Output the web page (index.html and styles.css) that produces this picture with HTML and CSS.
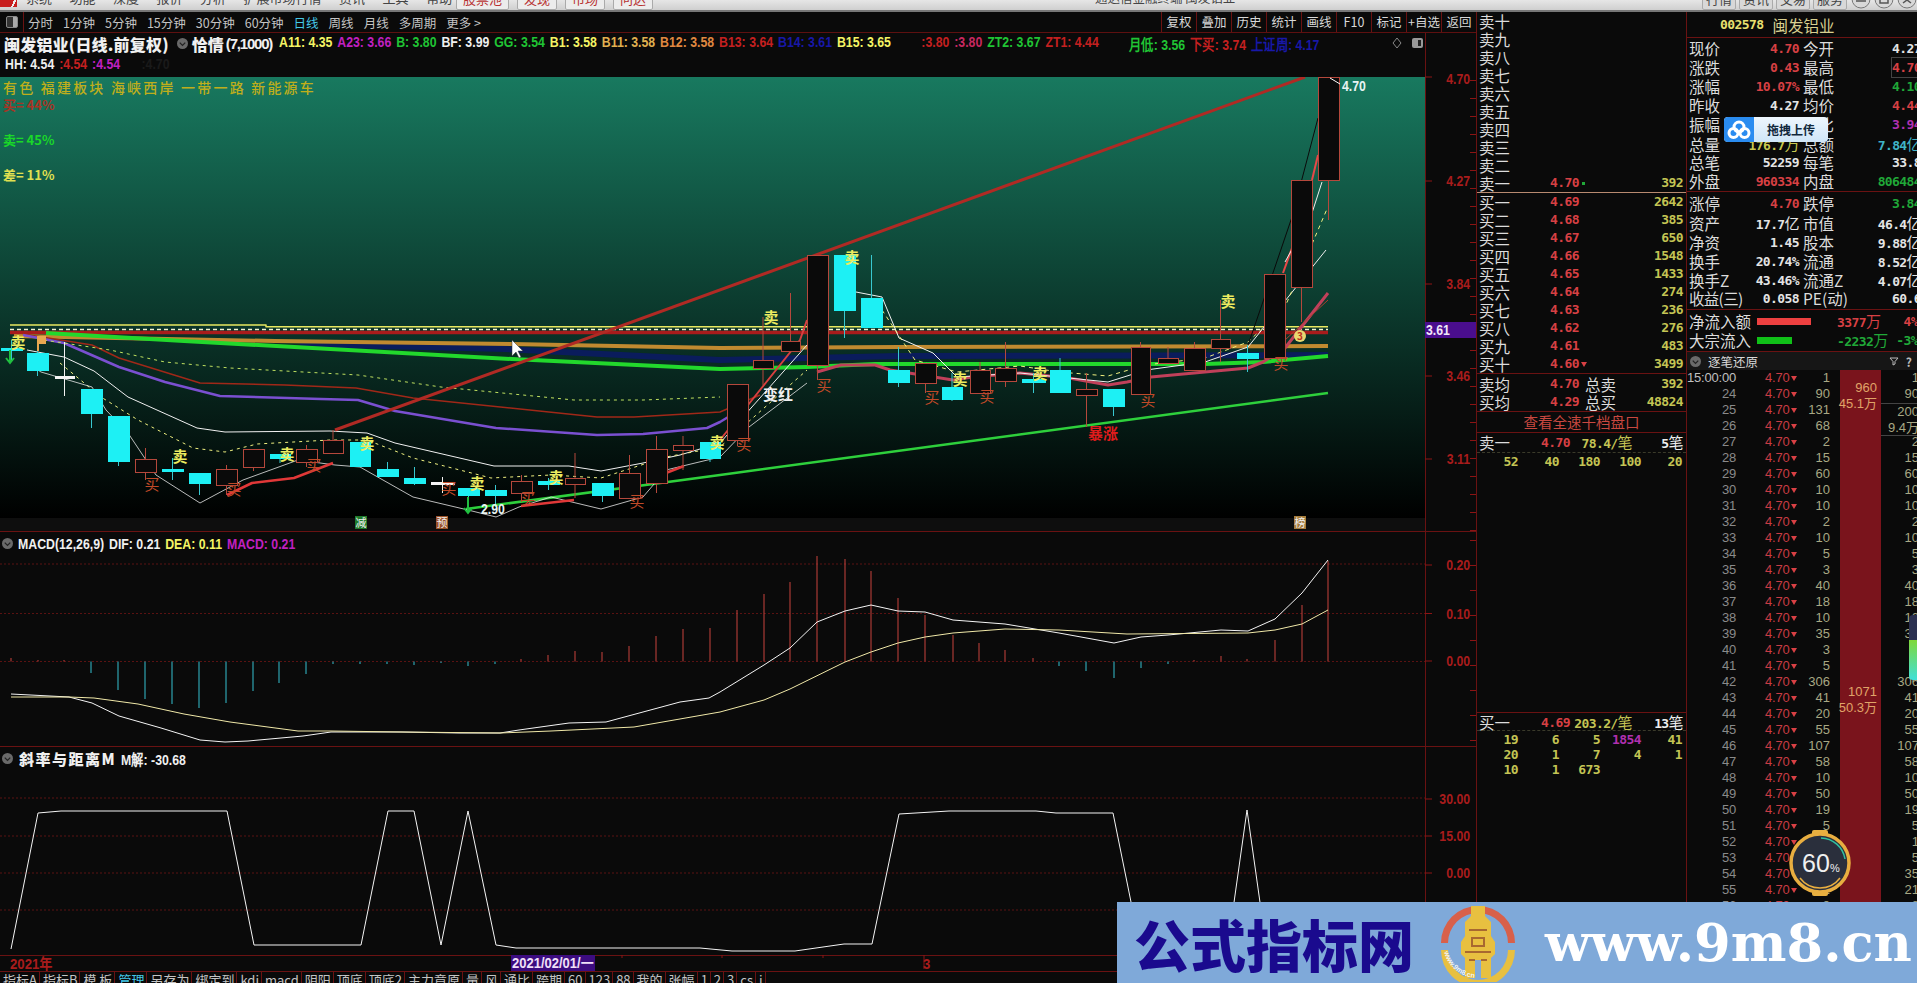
FILE: index.html
```html
<!DOCTYPE html>
<html lang="zh-CN">
  <head>
    <meta charset="UTF-8" />
    <title>闽发铝业</title>
    <link rel="stylesheet" href="styles.css">
  </head>
  <body>
    <header class="titlebar">
      <span class="logo"></span>
      <nav class="menu">
        <span>系统</span><span>功能</span><span>深度</span><span>报价</span><span>分析</span><span>扩展市场行情</span><span>资讯</span><span>工具</span><span>帮助</span>
      </nav>
      <nav class="menu-boxed">
        <span>股票池</span><span>发现</span><span>市场</span><span>问达</span>
      </nav>
      <span class="app-title">通达信金融终端 闽发铝业</span>
      <nav class="menu-boxed grey">
        <span>行情</span><span>资讯</span><span>交易</span><span>服务</span>
      </nav>
      <svg class="winbtns" viewBox="0 0 66 11">
        <g fill="#d8d8d8" stroke="#777">
          <circle cx="10" cy="-1" r="9" />
          <circle cx="33" cy="-1" r="9" />
          <circle cx="56" cy="-1" r="9" />
        </g>
        <path d="M5 1h10M29 -3h8v6h-8zM52 -3l8 6M60 -3l-8 6" stroke="#555" stroke-width="1.5" fill="none" />
      </svg>
    </header>

    <div class="workspace">
      <main class="chart-col">
        <div class="periods">
          <span class="toggle"><i></i></span>
          <div class="period-tabs">
            <span>分时</span><span>1分钟</span><span>5分钟</span><span>15分钟</span><span>30分钟</span><span>60分钟</span>
            <span class="on">日线</span><span>周线</span><span>月线</span><span>多周期</span><span>更多 &gt;</span>
          </div>
          <div class="tools">
            <span>复权</span><span>叠加</span><span>历史</span><span>统计</span><span>画线</span><span>F10</span><span>标记</span><span>+自选</span><span>返回</span>
          </div>
        </div>

        <section class="pane pane-main">
          <div class="plot">
            <div class="legend legend-main">
              <div class="legend-row">
                <div class="legend-head">
                  <b class="stock">闽发铝业(日线.前复权)</b>
                  <svg class="drop" viewBox="0 0 12 12"><circle cx="6" cy="6" r="6" /><path d="M3 5l3 3 3-3" /></svg>
                  <b class="stock">恰情</b>
                  <span class="stock-args">(7,1000)</span>
                </div>
                <div class="legend-values">
                  <span class="c-yellow">A11: 4.35</span>
                  <span class="c-purple">A23: 3.66</span>
                  <span class="c-green">B: 3.80</span>
                  <span class="c-white">BF: 3.99</span>
                  <span class="c-green">GG: 3.54</span>
                  <span class="c-yellow">B1: 3.58</span>
                  <span class="c-gold">B11: 3.58</span>
                  <span class="c-orange">B12: 3.58</span>
                  <span class="c-red">B13: 3.64</span>
                  <span class="c-navy">B14: 3.61</span>
                  <span class="c-yellow">B15: 3.65</span>
                  <span class="c-red far">:3.80</span>
                  <span class="c-rose">:3.80</span>
                  <span class="c-green">ZT2: 3.67</span>
                  <span class="c-red">ZT1: 4.44</span>
                  <span class="c-green far">月低: 3.56</span>
                  <span class="c-red">下买: 3.74</span>
                  <span class="c-navy">上证周: 4.17</span>
                </div>
              </div>
              <div class="legend-row second">
                <div class="legend-values">
                  <span class="c-white">HH: 4.54</span>
                  <span class="c-red">:4.54</span>
                  <span class="c-purple">:4.54</span>
                  <span class="c-hidden">:4.70</span>
                </div>
              </div>
              <svg class="legend-icons" viewBox="0 0 32 12">
                <path d="M5 1l4 5-4 5-4-5z" fill="none" stroke="#888" />
                <rect x="20" y="1" width="11" height="10" rx="2" fill="#999" />
                <rect x="26" y="3" width="3" height="6" fill="#222" />
              </svg>
            </div>
            <svg class="chart" viewBox="0 77 1425 454" width="1425" height="454">
              <defs>
                <linearGradient id="sky" x1="0" y1="0" x2="0" y2="1">
                  <stop offset="0" stop-color="#18795f" />
                  <stop offset="1" stop-color="#000" />
                </linearGradient>
              </defs>
              <rect x="0" y="77" width="1425" height="441" fill="url(#sky)" />
              <rect x="0" y="518" width="1425" height="13" fill="#0e0e0e" />

              <text class="tag-line" x="3" y="93">有色 福建板块 海峡西岸 一带一路 新能源车</text>
              <text class="ratio c-buy" x="3" y="110">买= 44%</text>
              <text class="ratio c-sell" x="3" y="145">卖= 45%</text>
              <text class="ratio c-diff" x="3" y="180">差= 11%</text>

              <g fill="none" stroke-linejoin="round">
                <path d="M10 325H266V326.7H1328" stroke="#e8e860" stroke-width="1.5" />
                <path d="M10 329.5H1328" stroke="#f4f4d0" stroke-width="1.5" stroke-dasharray="4 3" />
                <path d="M10 332.6H1328" stroke="#a81c1c" stroke-width="3.5" />
                <polyline points="300,344 505,349 720,360 900,356 1328,355" stroke="#0a1c5c" stroke-width="6" />
                <polyline points="14,336 275,341 512,344 720,348 900,347 1328,346" stroke="#c08a30" stroke-width="4" />
                <polyline points="46,333 184,341 512,359 720,369 807,367 875,364 1205,364 1263,362 1328,356" stroke="#22d82c" stroke-width="4" />
                <polyline points="466,509 720,475 1328,393" stroke="#2ed03c" stroke-width="2.5" />
                <polyline points="23,334 92,345 119,358 200,383 285,385 356,388 413,398 597,417 634,417 720,412 760,395" stroke="#a02818" stroke-width="1.5" />
                <polyline points="23,335 64,343 119,367 165,382 220,396 321,399 358,400 395,411 496,428 597,435 643,434 707,428 720,422 748,405" stroke="#7a50d0" stroke-width="2.5" />
                <polyline points="37,339 110,350 165,362 230,368 358,375 441,387 574,400 643,400 720,397" stroke="#bfe060" stroke-width="1" stroke-dasharray="3 4" />
                <polyline points="27,350 64,357 94,371 128,397 197,428 225,432 330,431 367,433 395,443 494,466 569,466 601,471 643,463 680,455 720,443 807,345" stroke="#f0f0f0" stroke-width="1" />
                <polyline points="60,363 101,397 138,420 193,448 225,452 257,444 330,440 367,440 413,458 491,478 551,475 601,478 666,457 720,447 807,370" stroke="#f0f080" stroke-width="1" stroke-dasharray="3 4" />
                <polyline points="27,363 41,372 92,387 106,410 128,433 156,475 200,503 243,480 298,460 335,465 360,467 413,497 468,510 496,517 519,507 551,497 601,509 643,497 666,470 720,457 749,427 807,383" stroke="#e8e8e8" stroke-width=".8" />
                <polyline points="227,495 252,483 294,478 333,463" stroke="#e03838" stroke-width="2.5" />
                <polyline points="521,506 574,500" stroke="#e03838" stroke-width="2.5" />
                <polyline points="666,473 684,466" stroke="#e03838" stroke-width="2.5" />
                <polyline points="720,440 748,405 800,340 807,320" stroke="#d84040" stroke-width="2" />
                <polyline points="817,372 841,365 875,365 890,370 953,380 972,377 1020,373 1069,378 1108,385 1127,382 1151,377 1248,368 1263,362 1285,348 1328,293" stroke="#c0405a" stroke-width="3" />
                <polyline points="1285,340 1328,300" stroke="#a84030" stroke-width="1" />
                <polyline points="856,292 882,297 899,338 933,353 957,377 1020,373 1059,377 1108,382 1146,370 1205,362 1248,347 1326,250" stroke="#f0f0f0" stroke-width="1" />
                <polyline points="882,310 915,360 957,372 1020,366 1059,372 1108,376 1146,365 1205,358 1248,342 1285,307 1327,209" stroke="#f0f080" stroke-width="1" stroke-dasharray="4 4" />
                <polyline points="1248,345 1275,267 1292,217 1318,118" stroke="#0a0a0a" stroke-width="1" />
                <polyline points="1283,273 1292,248" stroke="#e84848" stroke-width="2" />
                <polyline points="1312,180 1318,155" stroke="#e84848" stroke-width="2" />
                <polyline points="1285,262 1312,213 1322,182" stroke="#f0f0f0" stroke-width="1" />
                <polyline points="335,430 1305,77" stroke="#b02a24" stroke-width="3" />
              </g>
              <g id="candles"></g>
              <g id="marks"></g>
              <path d="M512 340v16l4-4 3 6 2-1-3-6h5z" fill="#fff" stroke="#333" stroke-width=".5" />
              <path d="M37 336h9v8h-7v7h-2z" fill="#e8a850" />
              <path d="M10 350v12M6 358l4 5 4-5M468 497v15M464 508l4 5 4-5" fill="none" stroke="#20c040" stroke-width="2" />
              <circle cx="1300" cy="336" r="6" fill="#e8d870" />
              <text class="mini" x="1297" y="340" fill="#c03020">3</text>
              <path d="M1330 78l10 6" stroke="#fff" fill="none" />
              <text class="price-note" x="1342" y="91">4.70</text>
              <text class="price-note" x="481" y="514">2.90</text>
              <rect x="355" y="516" width="12" height="13" fill="#1e7a2a" />
              <rect x="436" y="516" width="12" height="13" fill="#9c5228" />
              <rect x="1294" y="516" width="12" height="13" fill="#a57c3c" />
              <text class="flag-text" x="355.5" y="527">减</text>
              <text class="flag-text" x="436.5" y="527">预</text>
              <text class="flag-text" x="1294.5" y="527">榜</text>
            </svg>
          </div>
          <svg class="axis" viewBox="1425 33 51 498" width="51" height="498">
            <path class="axis-rule" d="M1425.5 33V531" />
            <path d="M1425 77h7M1425 181h7M1425 284h7M1425 376h7M1425 459h7" stroke="#8c1414" />
            <path class="axis-dash" d="M1473 80V531" stroke-dasharray="1 17" />
            <text class="axis-text" x="1470" y="84">4.70</text>
            <text class="axis-text" x="1470" y="186">4.27</text>
            <text class="axis-text" x="1470" y="289">3.84</text>
            <text class="axis-text" x="1470" y="381">3.46</text>
            <text class="axis-text" x="1470" y="464">3.11</text>
            <rect x="1425" y="322" width="51" height="16" fill="#4a0e8e" />
            <text class="axis-mark" x="1426" y="335">3.61</text>
          </svg>
        </section>

        <section class="pane pane-macd">
          <div class="plot">
            <div class="legend legend-sub macd-legend">
              <div class="legend-row">
                <div class="legend-head auto">
                  <svg class="drop" viewBox="0 0 12 12"><circle cx="6" cy="6" r="6" /><path d="M3 5l3 3 3-3" /></svg>
                </div>
                <div class="legend-values">
                  <span class="c-white">MACD(12,26,9)</span>
                  <span class="c-white">DIF: 0.21</span>
                  <span class="c-yellow">DEA: 0.11</span>
                  <span class="c-purple">MACD: 0.21</span>
                </div>
              </div>
            </div>
            <svg class="chart" viewBox="0 555 1425 191" width="1425" height="191">
              <path class="grid" d="M0 564H1425M0 613.5H1425M0 661.5H1425" />
              <g id="macd-bars"></g>
              <polyline class="macd-dif" points="11,694 50,696 69,697 92,703 119,716 161,728 200,740 225,742 248,741 303,736 331,732 402,732 459,733 500,733 519,730 569,723 606,722 680,702 709,698 720,692 764,665 790,648 817,622 845,611 871,605 898,611 925,612 953,620 979,622 1005,624 1059,633 1114,643 1141,637 1168,635 1221,630 1248,631 1275,619 1302,593 1328,560" />
              <polyline class="macd-dea" points="11,697 69,697 94,698 138,704 184,714 230,722 298,731 331,731 402,732 500,733 551,731 634,727 720,712 764,700 790,689 845,662 871,652 898,643 925,637 953,633 1005,629 1059,630 1127,634 1248,633 1275,630 1302,624 1328,610" />
            </svg>
          </div>
          <svg class="axis" viewBox="1425 532 51 214" width="51" height="214">
            <path class="axis-rule" d="M1425.5 532V746" />
            <path d="M1425 565h7M1425 613.5h7M1425 661h7" stroke="#8c1414" />
            <path class="axis-dash" d="M1473 540V746" stroke-dasharray="1 24" />
            <text class="axis-text" x="1470" y="570">0.20</text>
            <text class="axis-text" x="1470" y="619">0.10</text>
            <text class="axis-text" x="1470" y="666">0.00</text>
          </svg>
        </section>

        <section class="pane pane-slope">
          <div class="plot">
            <div class="legend legend-sub slope-legend">
              <div class="legend-row">
                <div class="legend-head auto">
                  <svg class="drop" viewBox="0 0 12 12"><circle cx="6" cy="6" r="6" /><path d="M3 5l3 3 3-3" /></svg>
                  <b class="c-white cjk-bold">斜率与距离M</b>
                </div>
                <div class="legend-values">
                  <span class="c-white">M解: -30.68</span>
                </div>
              </div>
            </div>
            <svg class="chart" viewBox="0 769 1425 186" width="1425" height="186">
              <path class="grid" d="M0 798H1425M0 836H1425M0 873H1425M0 910H1425" />
              <polyline class="slope-line" points="11,949 38,813 61,811 227,811 254,945 361,945 388,811 414,811 441,945 468,811 496,945 516,948 700,948 732,951 795,951 844,944 872,944 899,814 949,811 1036,811 1056,813 1113,813 1131,902 1140,945 1228,945 1247,810 1266,945" />
            </svg>
          </div>
          <svg class="axis" viewBox="1425 747 51 208" width="51" height="208">
            <path class="axis-rule" d="M1425.5 747V955" />
            <path d="M1425 799h7M1425 836h7M1425 873h7" stroke="#8c1414" />
            <text class="axis-text" x="1470" y="804">30.00</text>
            <text class="axis-text" x="1470" y="841">15.00</text>
            <text class="axis-text" x="1470" y="878">0.00</text>
          </svg>
        </section>

        <svg class="date-axis" viewBox="0 955 1476 16" width="1476" height="16">
          <path class="axis-rule" d="M0 955.5H1476" />
          <path d="M622 955v3M722 955v3M823 955v3M924 955v14" stroke="#8c1414" />
          <text class="date-year" x="10" y="969">2021年</text>
          <rect x="511" y="955" width="84" height="16" fill="#3c0c80" />
          <text class="date-cursor" x="512" y="968">2021/02/01/一</text>
          <text class="date-year" x="923" y="969">3</text>
        </svg>

        <div class="tabs">
          <span>指标A</span><span>指标B</span><span>模 板</span><span class="on">管理</span><span>另存为</span><span>绑定到</span><span>kdj</span><span>macd</span><span>阴阳</span><span>顶底</span><span>顶底2</span><span>主力竟原</span><span>量</span><span>风</span><span>通比</span><span>跨期</span><span>60</span><span>123</span><span>88</span><span>我的</span><span>张幅</span><span>1</span><span>2</span><span>3</span><span>cs</span><span>j</span>
        </div>
      </main>

      <aside class="book">
        <div class="asks">
          <div class="book-row"><span>卖十</span></div>
          <div class="book-row"><span>卖九</span></div>
          <div class="book-row"><span>卖八</span></div>
          <div class="book-row"><span>卖七</span></div>
          <div class="book-row"><span>卖六</span></div>
          <div class="book-row"><span>卖五</span></div>
          <div class="book-row"><span>卖四</span></div>
          <div class="book-row"><span>卖三</span></div>
          <div class="book-row"><span>卖二</span></div>
          <div class="book-row"><span>卖一</span><b class="red">4.70<i class="dot"></i></b><b class="qty">392</b></div>
        </div>
        <div class="bids">
          <div class="book-row"><span>买一</span><b class="red">4.69</b><b class="qty">2642</b></div>
          <div class="book-row"><span>买二</span><b class="red">4.68</b><b class="qty">385</b></div>
          <div class="book-row"><span>买三</span><b class="red">4.67</b><b class="qty">650</b></div>
          <div class="book-row"><span>买四</span><b class="red">4.66</b><b class="qty">1548</b></div>
          <div class="book-row"><span>买五</span><b class="red">4.65</b><b class="qty">1433</b></div>
          <div class="book-row"><span>买六</span><b class="red">4.64</b><b class="qty">274</b></div>
          <div class="book-row"><span>买七</span><b class="red">4.63</b><b class="qty">236</b></div>
          <div class="book-row"><span>买八</span><b class="red">4.62</b><b class="qty">276</b></div>
          <div class="book-row"><span>买九</span><b class="red">4.61</b><b class="qty">483</b></div>
          <div class="book-row"><span>买十</span><b class="red">4.60<i class="tri"></i></b><b class="qty">3499</b></div>
        </div>
        <div class="totals">
          <div class="book-row total"><span>卖均</span><b class="red">4.70</b><span class="sum">总卖</span><b class="qty">392</b></div>
          <div class="book-row total"><span>买均</span><b class="red">4.29</b><span class="sum">总买</span><b class="qty">48824</b></div>
        </div>
        <div class="depth-link">查看全速千档盘口</div>
        <div class="depth-row dashed"><span>卖一</span><b class="red">4.70</b><b class="qty">78.4/<i>笔</i></b><b class="count">5<i>笔</i></b></div>
        <div class="queue">
          <b>52</b><b>40</b><b>180</b><b>100</b><b>20</b>
        </div>
        <div class="book-fill"></div>
        <div class="depth-row dashed top-line"><span>买一</span><b class="red">4.69</b><b class="qty">203.2/<i>笔</i></b><b class="count">13<i>笔</i></b></div>
        <div class="queue tight">
          <b>19</b><b>6</b><b>5</b><b class="violet">1854</b><b>41</b>
          <b>20</b><b>1</b><b>7</b><b>4</b><b>1</b>
          <b>10</b><b>1</b><b>673</b>
        </div>
      </aside>

      <aside class="quote">
        <div class="quote-head"><b>002578</b><span>闽发铝业</span></div>
        <div class="quote-block">
          <div class="quote-row"><span>现价</span><b class="red">4.70</b><span>今开</span><b class="white">4.27</b></div>
          <div class="quote-row"><span>涨跌</span><b class="red">0.43</b><span>最高</span><b class="red boxed">4.70</b></div>
          <div class="quote-row"><span>涨幅</span><b class="red">10.07%</b><span>最低</span><b class="green">4.10</b></div>
          <div class="quote-row"><span>昨收</span><b class="white">4.27</b><span>均价</span><b class="red">4.44</b></div>
          <div class="quote-row"><span>振幅</span><b class="white">14.05%</b><span>量比</span><b class="violet">3.94</b></div>
          <div class="quote-row"><span>总量</span><b class="yellow">176.7<i>万</i></b><span>总额</span><b class="cyan">7.84<i>亿</i></b></div>
          <div class="quote-row"><span>总笔</span><b class="white">52259</b><span>每笔</span><b class="white">33.8</b></div>
          <div class="quote-row"><span>外盘</span><b class="red">960334</b><span>内盘</span><b class="green">806484</b></div>
        </div>
        <div class="quote-block">
          <div class="quote-row"><span>涨停</span><b class="red">4.70</b><span>跌停</span><b class="green">3.84</b></div>
          <div class="quote-row"><span>资产</span><b class="white">17.7<i>亿</i></b><span>市值</span><b class="white">46.4<i>亿</i></b></div>
          <div class="quote-row"><span>净资</span><b class="white">1.45</b><span>股本</span><b class="white">9.88<i>亿</i></b></div>
          <div class="quote-row"><span>换手</span><b class="white">20.74%</b><span>流通</span><b class="white">8.52<i>亿</i></b></div>
          <div class="quote-row"><span>换手Z</span><b class="white">43.46%</b><span>流通Z</span><b class="white">4.07<i>亿</i></b></div>
          <div class="quote-row"><span class="tight-label">收益(三)</span><b class="white">0.058</b><span>PE(动)</span><b class="white">60.6</b></div>
        </div>
        <div class="flow-block">
          <div class="flow-row"><span>净流入额</span><i class="flow-bar in"></i><b class="red">3377<i>万</i></b><b class="red pct">4%</b></div>
          <div class="flow-row"><span>大宗流入</span><i class="flow-bar out"></i><b class="green">-2232<i>万</i></b><b class="green pct">-3%</b></div>
        </div>
        <div class="tick-head">
          <svg class="drop" viewBox="0 0 12 12"><circle cx="6" cy="6" r="6" /><path d="M3 5l3 3 3-3" /></svg>
          <span>逐笔还原</span>
          <svg class="tick-filter" viewBox="0 0 10 10"><path d="M1 2h8L6 5.5V8L4 9V5.5z" fill="none" stroke="#bbb" /></svg>
          <b>?</b>
        </div>
        <div class="ticks">
          <div id="tick-rows"></div>
          <div class="big-order first">960<br />45.1万</div>
          <div class="big-order second">1071<br />50.3万</div>
          <div class="side-order">200<br />9.4万</div>
        </div>
      </aside>
    </div>

    <div class="upload">
      <span class="upload-icon">
        <svg viewBox="0 0 24 20" width="24" height="20">
          <g fill="none" stroke="#fff" stroke-width="3">
            <circle cx="12" cy="7" r="5" />
            <circle cx="6.5" cy="13" r="4.5" />
            <circle cx="17.5" cy="13" r="4.5" />
          </g>
        </svg>
      </span>
      <b>拖拽上传</b>
    </div>

    <svg class="speed" viewBox="0 0 64 66" width="64" height="66">
      <rect x="24" y="0" width="16" height="6" rx="2" fill="#e8b040" />
      <rect x="24" y="60" width="16" height="6" rx="2" fill="#e8b040" />
      <circle cx="32" cy="33" r="29" fill="#2a2f3c" stroke="#e8ae40" stroke-width="3.5" />
      <path d="M33 8a25 25 0 0 1 24 21" fill="none" stroke="#30c0a0" stroke-width="1.5" />
      <path d="M12 48a25 25 0 0 0 40 0" fill="none" stroke="#e8ae40" stroke-width="1.5" />
      <text class="speed-num" x="14" y="42">60</text>
      <text class="speed-pct" x="42" y="42">%</text>
    </svg>

    <div class="mini-meter"></div>

    <div class="banner">
      <span class="banner-name">公式指标网</span>
      <svg class="banner-logo" viewBox="0 0 78 78" width="78" height="78">
        <defs>
          <path id="logo-ring" d="M5 48a35 35 0 0 0 32 26" />
        </defs>
        <path d="M2 39a37 37 0 0 1 74 0h-7a30 30 0 0 0-60 0z" fill="#d8604a" />
        <path d="M2 46a37 37 0 0 0 74 0h-7a30 30 0 0 1-60 0z" fill="#e8c040" />
        <path d="M32 2h14v10l6 6v14l4 6v12l-4 4v20H42V56h-6v18H26V54l-4-4V38l4-6V18l6-6z" fill="#e8c040" />
        <path d="M30 26h18M33 34h12v8H33zM26 48h26M30 56h6M42 56h6" fill="none" stroke="#a86830" stroke-width="2" />
        <text class="logo-ring-text"><textPath href="#logo-ring">www.9m8.cn</textPath></text>
      </svg>
      <span class="banner-url">www.9m8.cn</span>
    </div>

    <script src="script.js"></script>
  </body>
</html>
```

FILE: styles.css
```css
* {
  margin: 0;
  padding: 0;
  box-sizing: border-box;
}
html,
body {
  width: 1917px;
  height: 983px;
  overflow: hidden;
}
body {
  background-color: #0a0a0a;
  color: #dcdcdc;
  font-family: "Noto Sans CJK SC", "Liberation Sans", sans-serif;
  position: relative;
}
i,
em {
  font-style: normal;
}

/* title bar, only its lower part is on screen */
.titlebar {
  height: 12px;
  display: flex;
  align-items: flex-start;
  background: linear-gradient(#e6e6e6, #cfcfcf);
  border-bottom: 2px solid #777;
  overflow: hidden;
  font-size: 13px;
  line-height: 16px;
  color: #444;
}
.logo {
  width: 17px;
  height: 7px;
  background: linear-gradient(115deg, #c81e1e 70%, #eee 70%, #eee 80%, #c81e1e 80%);
  flex: none;
}
.menu {
  display: flex;
  gap: 17.5px;
  margin: -10px 0 0 9px;
  width: 430px;
  flex: none;
}
.menu-boxed {
  display: flex;
  gap: 8px;
  margin-top: -6px;
  flex: none;
}
.menu-boxed span {
  height: 16px;
  padding: 0 6px;
  margin-top: 0;
  line-height: 8px;
  color: #b83030;
  border: 1px solid #aaa;
  border-radius: 2px;
  background: #ececec;
}
.menu-boxed.grey {
  gap: 3px;
}
.menu-boxed.grey span {
  color: #444;
  padding: 0 3px;
  background: #d8d8d8;
}
.app-title {
  margin: -10px 467px 0 442px;
  flex: none;
  width: 140px;
  white-space: nowrap;
  font-size: 12.5px;
}
.winbtns {
  width: 66px;
  height: 11px;
  margin-left: auto;
  flex: none;
}

.workspace {
  display: grid;
  grid-template-columns: 1476px 211px 230px;
  height: 971px;
}
.chart-col {
  display: flex;
  flex-direction: column;
  min-width: 0;
}

/* period bar */
.periods {
  height: 21px;
  display: flex;
  align-items: center;
  font-size: 12.5px;
  color: #c4c4c4;
  border-bottom: 1px solid #5e1010;
  flex: none;
}
.toggle {
  width: 24px;
  height: 20px;
  display: flex;
  align-items: center;
  justify-content: center;
  border-right: 1px solid #6a1212;
  flex: none;
}
.toggle i {
  width: 12px;
  height: 12px;
  background: linear-gradient(90deg, #333 60%, #aaa 60%);
  border: 1px solid #888;
  border-radius: 2px;
}
.period-tabs {
  display: flex;
  gap: 10px;
  margin-left: 4px;
}
.period-tabs .on {
  color: #45c8e8;
}
.tools {
  margin-left: auto;
  display: flex;
  height: 20px;
  color: #d8d8d8;
}
.tools span {
  width: 35px;
  text-align: center;
  line-height: 20px;
  border-left: 1px solid #6a1212;
  white-space: nowrap;
}

/* chart panes */
.pane {
  display: flex;
  flex: none;
  border-bottom: 1px solid #6a1212;
}
.pane-main {
  height: 499px;
}
.pane-macd {
  height: 215px;
}
.pane-slope {
  height: 208px;
  border-bottom: 0;
}
.plot {
  width: 1425px;
  flex: none;
  position: relative;
}
.chart {
  display: block;
}
.axis {
  display: block;
  flex: none;
  overflow: hidden;
}
.axis-rule {
  fill: none;
  stroke: #6a1212;
}
.legend-main {
  height: 44px;
  padding: 0 0 0 4px;
  position: relative;
}
.macd-legend {
  height: 23px;
  padding: 1px 0 0 2px;
}
.slope-legend {
  height: 22px;
  padding: 1px 0 0 2px;
}
.legend-row {
  display: flex;
  align-items: center;
  height: 21px;
  font-family: "Liberation Sans", sans-serif;
  font-size: 15px;
  font-weight: 700;
  white-space: nowrap;
}
.legend-row.second {
  height: 18px;
  margin-left: 1px;
}
.legend-head {
  width: 275px;
  flex: none;
  display: flex;
  align-items: center;
  gap: 4px;
}
.legend-head.auto {
  width: auto;
  gap: 6px;
  margin-right: 5px;
}
.legend-values {
  display: flex;
  gap: 6px;
  transform: scaleX(0.82);
  transform-origin: left center;
}
.legend-values .far {
  margin-left: 31px;
}
.legend-values .c-hidden {
  margin-left: 20px;
}
.stock {
  font-family: "Noto Sans CJK SC", sans-serif;
  font-size: 16px;
  color: #f0f0f0;
}
.stock:first-child {
  letter-spacing: 0.2px;
  margin-right: 4px;
}
.stock-args {
  color: #f0f0f0;
  letter-spacing: -1.2px;
  margin-left: -2px;
}
.cjk-bold {
  font-family: "Noto Sans CJK SC", sans-serif;
  font-size: 15px;
  letter-spacing: 1.5px;
}
.drop {
  width: 11px;
  height: 11px;
  flex: none;
}
.drop circle {
  fill: #6a6a6a;
}
.drop path {
  fill: none;
  stroke: #222;
  stroke-width: 1.4;
}
.legend-icons {
  position: absolute;
  left: 1392px;
  top: 4px;
  width: 32px;
  height: 12px;
}
.c-white { color: #f0f0f0; }
.c-yellow { color: #f4f464; }
.c-gold { color: #e0b050; }
.c-orange { color: #e08840; }
.c-purple { color: #c020c0; }
.c-green { color: #20c434; }
.c-red { color: #c42020; }
.c-rose { color: #c82860; }
.c-navy { color: #1818a8; }
.c-hidden { color: #1a1a1a; }

/* text inside the svg charts */
.tag-line {
  font-size: 14px;
  font-weight: 500;
  fill: #bfae1c;
  letter-spacing: 2.2px;
}
.ratio {
  font-size: 13px;
  font-weight: 700;
}
.ratio.c-buy { fill: #a83424; }
.ratio.c-sell { fill: #1ad828; }
.ratio.c-diff { fill: #e0e050; }
.sell-mark {
  font-size: 15px;
  font-weight: 700;
  fill: #ecec60;
  text-anchor: middle;
}
.buy-mark {
  font-size: 15px;
  fill: #c04a28;
  text-anchor: middle;
}
.note-white {
  font-size: 15px;
  font-weight: 700;
  fill: #f0f0f0;
  text-anchor: middle;
}
.note-red {
  font-size: 15px;
  font-weight: 700;
  fill: #e01c1c;
  text-anchor: middle;
}
.price-note,
.axis-mark {
  font-family: "Liberation Sans", sans-serif;
  font-size: 15px;
  font-weight: 700;
  transform-box: fill-box;
  transform-origin: 0 50%;
  transform: scaleX(0.82);
}
.price-note {
  fill: #e8f4f4;
}
.axis-mark {
  fill: #f0e8f8;
}
.mini {
  font-size: 10px;
  font-weight: 700;
}
.flag-text {
  font-size: 11px;
  fill: #f0f0f0;
}
.grid {
  fill: none;
  stroke: #5a1212;
  stroke-dasharray: 2 2;
}
.macd-dif,
.macd-dea,
.slope-line {
  fill: none;
  stroke-width: 1;
}
.macd-dif,
.slope-line {
  stroke: #f4f4f4;
}
.macd-dea {
  stroke: #f0e8a8;
}
.axis-text {
  font-family: "Liberation Sans", sans-serif;
  font-size: 15px;
  font-weight: 700;
  fill: #a81c1c;
  text-anchor: end;
  transform-box: fill-box;
  transform-origin: 100% 50%;
  transform: scaleX(0.82);
}
.axis-dash {
  fill: none;
  stroke: #8c1414;
  stroke-width: 6;
}
.date-axis {
  display: block;
  flex: none;
}
.date-year,
.date-cursor {
  font-family: "Liberation Sans", "Noto Sans CJK SC", sans-serif;
  font-weight: 700;
  transform-box: fill-box;
  transform-origin: 0 50%;
}
.date-year {
  font-size: 15px;
  fill: #a81c1c;
  transform: scaleX(0.88);
}
.date-cursor {
  font-size: 14px;
  fill: #f0e0f8;
  transform: scaleX(0.93);
}

/* bottom tabs */
.tabs {
  height: 12px;
  display: flex;
  overflow: hidden;
  border-top: 1px solid #6a1212;
  font-size: 13px;
  line-height: 15px;
  color: #c4c4c4;
  flex: none;
}
.tabs span {
  padding: 0 2px 0 3px;
  border-right: 1px solid #6a1212;
  white-space: nowrap;
}
.tabs .on {
  color: #45c8e8;
}

/* order book */
.book {
  display: flex;
  flex-direction: column;
  border-left: 1px solid #6a1212;
  border-right: 1px solid #6a1212;
  font-size: 15.5px;
  min-height: 0;
  overflow: hidden;
}
.asks {
  border-bottom: 1px solid #b88a70;
  height: 181px;
  flex: none;
}
.bids {
  border-bottom: 1px solid #6a1212;
  height: 181px;
  flex: none;
}
.book-row {
  height: 18px;
  display: grid;
  grid-template-columns: 71px 50px 1fr;
  align-items: center;
  padding: 0 3px 0 2px;
  line-height: 18px;
}
.book-row b,
.depth-row b,
.queue b,
.quote-row b,
.flow-row b,
.quote-head b {
  font-family: "DejaVu Sans Mono", "Liberation Mono", monospace;
  font-size: 13px;
  letter-spacing: -0.6px;
  font-weight: 700;
}
.book-row .qty,
.depth-row .qty,
.depth-row .count {
  text-align: right;
}
.qty {
  color: #c4c454;
}
.red {
  color: #d84044;
}
.white {
  color: #e4e4e4;
}
.green {
  color: #20a838;
}
.yellow {
  color: #c8c850;
}
.cyan {
  color: #40b4c8;
}
.violet {
  color: #b030b0;
}
.dot {
  display: inline-block;
  width: 3px;
  height: 3px;
  margin-left: 3px;
  vertical-align: middle;
  background-color: #20a838;
}
.tri {
  display: inline-block;
  margin-left: 2px;
  vertical-align: middle;
  border-left: 3px solid transparent;
  border-right: 3px solid transparent;
  border-top: 5px solid #d84044;
}
.total {
  grid-template-columns: 71px 35px 40px 1fr;
}
.totals {
  height: 38px;
  flex: none;
  padding-top: 1px;
  border-bottom: 1px solid #6a1212;
}
.depth-link {
  height: 21px;
  flex: none;
  line-height: 20px;
  text-align: center;
  font-size: 14.5px;
  color: #c84840;
  border-bottom: 1px solid #6a1212;
}
.depth-row {
  height: 20px;
  flex: none;
  display: grid;
  grid-template-columns: 62px 30px 61px 51px;
  align-items: center;
  padding: 0 0 3px 2px;
  line-height: 17px;
}
.depth-row b i {
  font-family: "Noto Sans CJK SC", sans-serif;
  font-size: 15px;
  font-weight: 400;
}
.depth-row .count {
  color: #eee;
}
.dashed {
  border-bottom: 1px dashed #3a3a2a;
}
.top-line {
  border-top: 1px solid #6a1212;
  height: 19px;
}
.queue {
  display: grid;
  grid-template-columns: repeat(5, 41px);
  padding-top: 1px;
  height: 17px;
  flex: none;
}
.queue b {
  text-align: right;
  color: #c4c454;
  line-height: 16px;
}
.queue.tight {
  height: auto;
}
.queue.tight b {
  line-height: 15px;
}
.queue b.violet {
  color: #b030b0;
}
.book-fill {
  height: 242px;
  flex: none;
}

/* right column */
.quote {
  display: flex;
  flex-direction: column;
  overflow: hidden;
  min-height: 0;
}
.quote-head {
  height: 26px;
  flex: none;
  display: flex;
  align-items: center;
  padding: 0 0 0 33px;
  gap: 9px;
  border-bottom: 1px solid #6a1212;
  color: #d8d090;
  font-size: 15.5px;
}
.quote-head b {
  color: #e8e070;
}
.quote-block {
  padding: 1px 0 0 2px;
  border-bottom: 1px solid #6a1212;
  flex: none;
}
.quote-block:first-of-type {
  height: 154px;
}
.quote-block + .quote-block {
  height: 118px;
  padding-top: 2px;
}
.quote-row {
  width: 232px;
  height: 19px;
  display: grid;
  grid-template-columns: 31px 82px 36px 83px;
  align-items: center;
  line-height: 19px;
  font-size: 15.5px;
  white-space: nowrap;
}
.quote-row b {
  text-align: right;
}
.quote-row b:first-of-type {
  margin-right: 3px;
}
.quote-row span:nth-of-type(2) {
  margin-left: 1px;
}
.quote-row .tight-label {
  letter-spacing: -0.7px;
}
.quote-row i,
.flow-row i {
  font-family: "Noto Sans CJK SC", sans-serif;
  font-weight: 400;
  font-size: 15px;
}
.boxed {
  justify-self: end;
  outline: 1px solid #444;
}
.flow-block {
  height: 42px;
  flex: none;
  padding: 1px 0 0 2px;
  border-bottom: 1px solid #6a1212;
}
.flow-row {
  height: 19px;
  display: grid;
  grid-template-columns: 68px 80px 42px 38px;
  align-items: center;
  line-height: 19px;
  font-size: 15.5px;
  white-space: nowrap;
}
.flow-row > b {
  text-align: right;
}
.flow-row .pct {
  margin-right: -1px;
}
.flow-bar {
  display: block;
  height: 7px;
}
.flow-bar.in {
  width: 54px;
  background-color: #ee4040;
}
.flow-bar.out {
  width: 35px;
  background-color: #10c018;
}
.tick-head {
  height: 18px;
  flex: none;
  display: flex;
  align-items: center;
  gap: 7px;
  padding: 0 5px 0 3px;
  font-size: 12.5px;
  color: #d8d8d8;
  background-color: #161616;
}
.tick-head b {
  font-size: 12px;
  color: #bbb;
}
.tick-filter {
  margin-left: auto;
  width: 10px;
  height: 10px;
}
.ticks {
  position: relative;
}
.tick-row {
  height: 16px;
  display: grid;
  grid-template-columns: 49px 59px 35px 51px 38px;
  width: 232px;
  align-items: center;
  font-family: "Liberation Sans", sans-serif;
  font-size: 13px;
  line-height: 16px;
  white-space: nowrap;
}
.tick-row .time {
  text-align: right;
  color: #8a8a8a;
  letter-spacing: -0.2px;
}
.tick-row .time.first {
  color: #c0c0c0;
}
.tick-row .price {
  padding-left: 29px;
  color: #c83c44;
  letter-spacing: -0.2px;
}
.tick-row .vol {
  text-align: right;
  color: #a8a884;
}
.tick-row .bar {
  height: 16px;
  margin-left: 10px;
  background-color: #7a141c;
}
.tick-row .tri {
  margin-left: 1px;
}
.big-order {
  position: absolute;
  left: 133px;
  width: 59px;
  padding-right: 2px;
  text-align: right;
  font-family: "Liberation Sans", sans-serif;
  font-size: 13px;
  line-height: 16px;
  color: #e0a468;
}
.big-order.first {
  top: 10px;
}
.big-order.second {
  top: 314px;
}
.side-order {
  position: absolute;
  left: 194px;
  top: 33px;
  width: 38px;
  height: 33px;
  text-align: right;
  font-family: "Liberation Sans", sans-serif;
  font-size: 13px;
  line-height: 16px;
  color: #a8a884;
  border-top: 1px solid #444;
  border-bottom: 1px solid #444;
}

/* floating widgets */
.upload {
  position: absolute;
  left: 1724px;
  top: 117px;
  width: 104px;
  height: 25px;
  display: flex;
  border-radius: 4px;
  overflow: hidden;
  background: linear-gradient(#eef6fd, #cfe6f8);
  color: #10283c;
  font-size: 12px;
  line-height: 25px;
}
.upload b {
  flex: 1;
  text-align: center;
}
.upload-icon {
  width: 30px;
  display: flex;
  align-items: center;
  justify-content: center;
  background-color: #2a8cf0;
}
.speed {
  position: absolute;
  left: 1788px;
  top: 830px;
}
.speed-num {
  font-family: "Liberation Sans", sans-serif;
  font-size: 25px;
  fill: #f0f0f0;
}
.speed-pct {
  font-family: "Liberation Sans", sans-serif;
  font-size: 11px;
  fill: #f0f0f0;
}
.mini-meter {
  position: absolute;
  left: 1909px;
  top: 615px;
  width: 8px;
  height: 65px;
  border-radius: 4px 0 0 4px;
  background: linear-gradient(#2a3050 0, #2a3050 38%, #80d838 38%, #40e0d8 100%);
}
.banner {
  position: absolute;
  left: 1117px;
  top: 902px;
  width: 800px;
  height: 81px;
  display: flex;
  align-items: center;
  background-color: #7fa9d9;
}
.banner-name {
  margin-left: 17px;
  width: 282px;
  flex: none;
  font-size: 56px;
  font-weight: 900;
  line-height: 81px;
  color: #1a0a8e;
  white-space: nowrap;
}
.banner-logo {
  margin-left: 23px;
  flex: none;
}
.logo-ring-text {
  font-family: "Liberation Sans", sans-serif;
  font-size: 7px;
  font-weight: 700;
  fill: #f4f4f4;
}
.banner-url {
  margin-left: 28px;
  font-family: "DejaVu Serif", "Liberation Serif", serif;
  font-size: 52.7px;
  font-weight: 900;
  line-height: 81px;
  color: #fff;
  white-space: nowrap;
}
```

FILE: script.js
```js
// candles: left, right, body top, body bottom, wick top, wick bottom, kind
// kind: c = falling (cyan), r = rising (hollow), w = white cross
const candles = [
  [1, 22, 348, 350, 340, 360, "c"],
  [27, 48, 353, 370, 350, 376, "c"],
  [55, 74, 376, 378, 342, 396, "w"],
  [81, 102, 389, 413, 389, 428, "c"],
  [108, 129, 416, 461, 416, 466, "c"],
  [135, 156, 459, 472, 448, 480, "r"],
  [162, 183, 469, 471, 458, 480, "c"],
  [189, 210, 473, 483, 473, 495, "c"],
  [216, 237, 469, 485, 465, 495, "r"],
  [243, 264, 449, 467, 449, 471, "r"],
  [270, 290, 454, 458, 454, 463, "c"],
  [296, 317, 449, 462, 445, 467, "r"],
  [323, 343, 440, 453, 430, 453, "r"],
  [350, 370, 442, 466, 442, 466, "c"],
  [377, 398, 469, 476, 462, 476, "c"],
  [404, 425, 478, 483, 467, 485, "c"],
  [431, 454, 482, 484, 477, 493, "w"],
  [458, 479, 488, 495, 488, 497, "c"],
  [485, 506, 490, 495, 485, 507, "c"],
  [511, 532, 481, 493, 475, 502, "r"],
  [538, 559, 481, 484, 478, 490, "c"],
  [565, 585, 478, 484, 453, 498, "r"],
  [592, 613, 483, 495, 483, 502, "c"],
  [619, 640, 473, 498, 455, 498, "r"],
  [646, 667, 449, 483, 436, 493, "r"],
  [673, 693, 445, 450, 436, 470, "r"],
  [700, 720, 442, 458, 442, 462, "c"],
  [727, 748, 384, 440, 384, 446, "r"],
  [753, 773, 360, 368, 317, 385, "r"],
  [781, 800, 341, 351, 293, 351, "r"],
  [807, 828, 255, 365, 255, 380, "r"],
  [834, 855, 255, 310, 255, 338, "c"],
  [861, 882, 298, 327, 255, 327, "c"],
  [888, 909, 370, 382, 347, 387, "c"],
  [915, 936, 363, 383, 363, 393, "r"],
  [942, 962, 387, 399, 373, 401, "c"],
  [970, 990, 370, 393, 362, 393, "r"],
  [995, 1016, 368, 381, 342, 387, "r"],
  [1022, 1045, 379, 382, 373, 393, "c"],
  [1050, 1070, 370, 392, 358, 392, "c"],
  [1076, 1097, 389, 395, 373, 427, "r"],
  [1103, 1124, 389, 406, 389, 416, "c"],
  [1131, 1150, 347, 394, 342, 394, "r"],
  [1158, 1178, 358, 363, 347, 363, "r"],
  [1184, 1205, 348, 370, 342, 370, "r"],
  [1211, 1230, 339, 348, 300, 362, "r"],
  [1237, 1258, 353, 358, 345, 372, "c"],
  [1264, 1285, 274, 358, 274, 358, "r"],
  [1291, 1312, 180, 287, 180, 322, "r"],
  [1318, 1339, 77, 180, 77, 220, "r"],
];

const candleColors = {
  c: { fill: "#1df0f4", edge: "#1df0f4", wick: "#38c8d0" },
  r: { fill: "#0a0a0a", edge: "#b5483c", wick: "#b5483c" },
  w: { fill: "#f4f4f4", edge: "#f4f4f4", wick: "#f4f4f4" },
};

document.getElementById("candles").innerHTML = candles
  .map(([x0, x1, top, bot, wickTop, wickBot, kind]) => {
    const col = candleColors[kind];
    const mid = (x0 + x1) / 2;
    return `
      <line x1="${mid}" x2="${mid}" y1="${wickTop}" y2="${wickBot}" stroke="${col.wick}" />
      <rect x="${x0 + 0.5}" y="${top + 0.5}" width="${x1 - x0}" height="${bot - top}" fill="${col.fill}" stroke="${col.edge}" />
    `;
  })
  .join("");

// text marks on top of the candles: class, text, x, y (centre of the glyph)
const marks = [
  ...[[18, 342], [180, 456], [287, 454], [367, 443], [477, 483], [556, 477], [717, 442], [852, 257], [771, 317], [960, 379], [1040, 373], [1228, 301]].map((p) => ["sell-mark", "卖", ...p]),
  ...[[152, 484], [234, 489], [314, 465], [449, 488], [528, 498], [637, 501], [744, 444], [824, 385], [932, 397], [987, 396], [1148, 400], [1281, 363]].map((p) => ["buy-mark", "买", ...p]),
  ["note-white", "变红", 778, 394],
  ["note-red", "暴涨", 1103, 433],
];

document.getElementById("marks").innerHTML = marks
  .map(([cls, text, x, y]) => `<text class="${cls}" x="${x}" y="${y + 6}">${text}</text>`)
  .join("");

// macd histogram: x, end of the bar (zero line is at 661.5)
const macd = [
  [11, 658], [38, 660], [64, 660], [91, 673], [118, 690], [145, 699], [172, 704], [199, 708], [226, 703],
  [253, 691], [279, 683], [306, 674], [333, 664], [360, 664], [387, 664], [414, 665], [441, 663], [468, 666],
  [495, 664], [521, 659], [548, 655], [575, 651], [602, 652], [629, 646], [656, 636], [683, 629], [710, 628],
  [737, 610], [764, 594], [790, 582], [817, 556], [845, 559], [871, 571], [898, 598], [925, 615], [953, 635],
  [979, 643], [1005, 650], [1033, 658], [1059, 666], [1086, 671], [1114, 678], [1141, 668], [1168, 664],
  [1194, 660], [1221, 656], [1247, 659], [1275, 640], [1302, 605], [1328, 561],
];

document.getElementById("macd-bars").innerHTML = macd
  .map(([x, end]) => {
    const color = end > 661.5 ? "#34c0d0" : "#c8423c";
    return `<line x1="${x}" x2="${x}" y1="661.5" y2="${end}" stroke="${color}" />`;
  })
  .join("");

// tape rows, the second volume column is blank where a big order label sits
const vols = [1, 90, 131, 68, 2, 15, 60, 10, 10, 2, 10, 5, 3, 40, 18, 10, 35, 3, 5, 306, 41, 20, 55, 107, 58, 10, 50, 19, 5, 1, 5, 35, 21, 8];

document.getElementById("tick-rows").innerHTML = vols
  .map((vol, i) => {
    const time = i === 0 ? "15:00:00" : 23 + i;
    const side = i === 2 || i === 3 ? "" : vol;
    return `
      <div class="tick-row">
        <span class="time ${i === 0 ? "first" : ""}">${time}</span>
        <span class="price">4.70<i class="tri"></i></span>
        <span class="vol">${vol}</span>
        <span class="bar"></span>
        <span class="vol">${side}</span>
      </div>
    `;
  })
  .join("");
```
